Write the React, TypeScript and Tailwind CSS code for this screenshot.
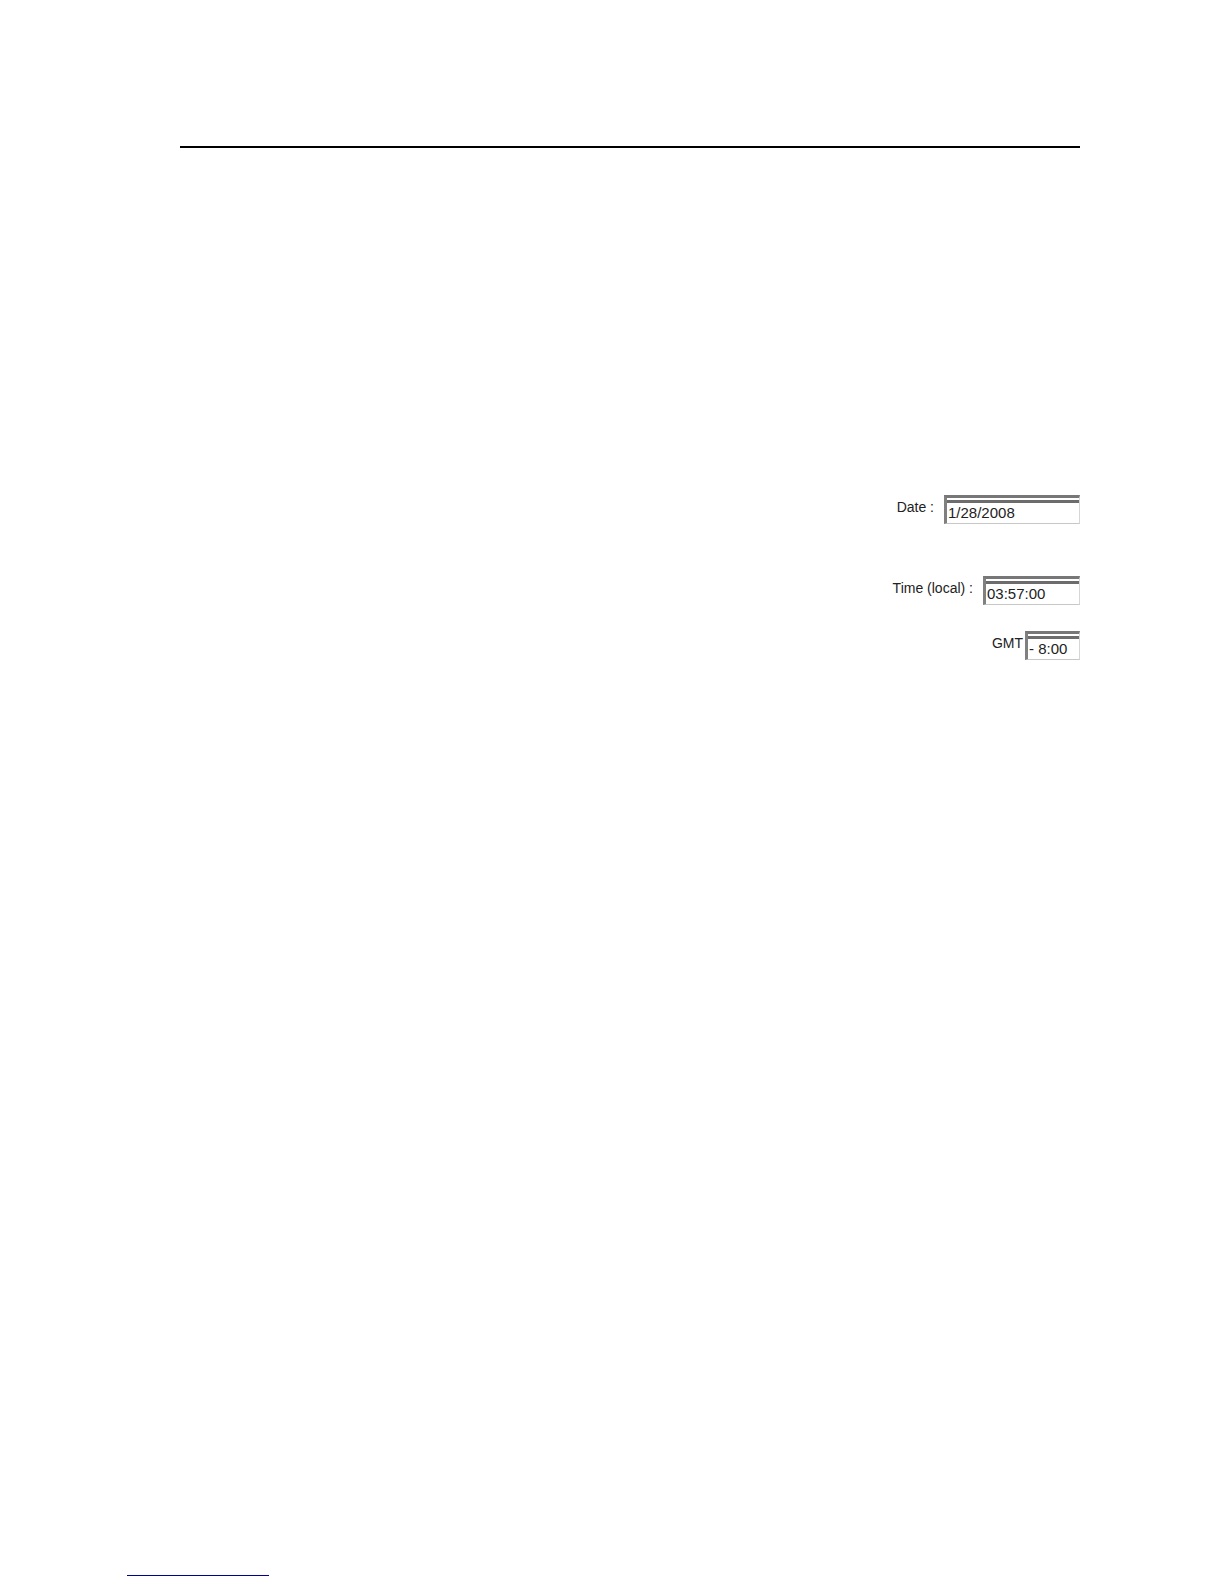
import React, { useState } from 'react';

interface FieldProps {
  id: string;
  label: string;
  initial: string;
  rowClass: string;
  boxClass: string;
}

function Field({ id, label, initial, rowClass, boxClass }: FieldProps) {
  const [value, setValue] = useState(initial);

  return (
    <div className={`flex items-start justify-end ${rowClass}`}>
      <label htmlFor={id} className="pt-1 text-[14px] leading-4 whitespace-pre">
        {label}
      </label>
      {/* Sunken box with a second bar under its top edge */}
      <div
        className={`border-t-3 border-r border-b border-l-3 border-t-[#777] border-r-[#d6d6d6] border-b-[#c8c8c8] border-l-[#808080] pt-[2px] ${boxClass}`}
      >
        <input
          id={id}
          type="text"
          value={value}
          onChange={(e) => setValue(e.target.value)}
          className="block h-[23px] w-full border-t-3 border-[#6c6c6c] bg-white pb-px pl-px text-[15px] leading-[19px] outline-none"
        />
      </div>
    </div>
  );
}

export default function App() {
  return (
    <div className="flex min-h-screen flex-col bg-white font-['Liberation_Sans',Arial,sans-serif] text-[#222]">
      <main className="mr-36 ml-[180px] pt-[146px]">
        <hr className="border-t-2 border-black" />
        <form className="mt-[347px]">
          <Field id="date" label="Date :" initial="1/28/2008" rowClass="gap-[10px]" boxClass="w-[136px]" />
          <Field id="time" label="Time (local) :" initial="03:57:00" rowClass="mt-[52px] gap-[10px]" boxClass="w-[97px]" />
          <Field id="gmt" label="GMT" initial="- 8:00" rowClass="mt-[26px] gap-[2px]" boxClass="w-[55px]" />
        </form>
      </main>
      <footer className="mt-auto pb-2 pl-[127px]">
        <hr className="h-px w-[142px] border-0 bg-[#000096]" />
      </footer>
    </div>
  );
}
